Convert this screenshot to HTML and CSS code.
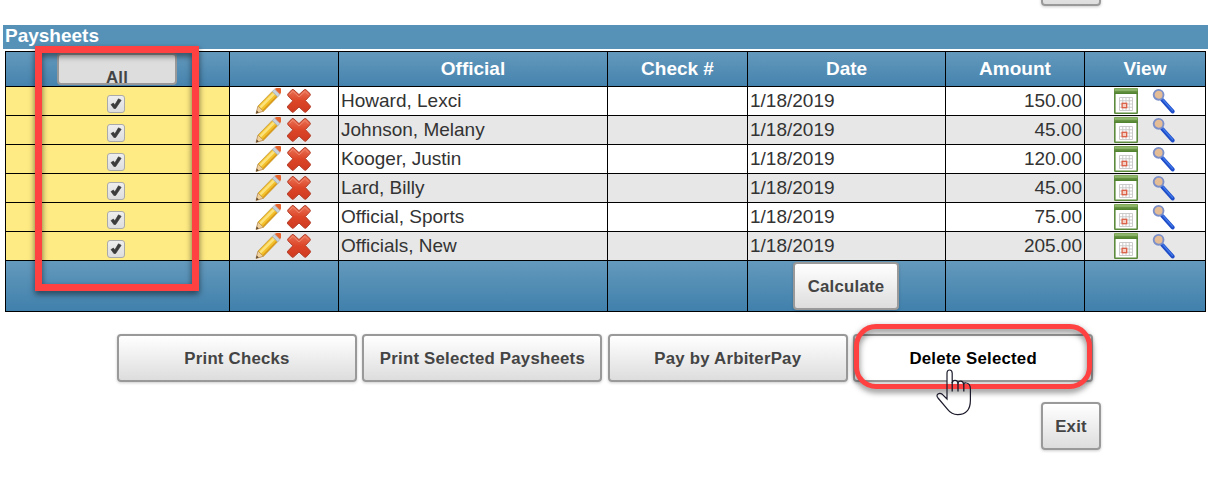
FILE: index.html
```
<!DOCTYPE html>
<html lang="en">
<head>
    <meta charset="UTF-8">
    <meta name="viewport" content="width=device-width, initial-scale=1.0">
    <title>Paysheets</title>
    <link rel="stylesheet" href="styles.css">
</head>
<body>
    <!-- Shared row icons -->
    <svg class="sprite" aria-hidden="true">
        <defs>
            <linearGradient id="redFill" x1="0" y1="0" x2="0" y2="1">
                <stop offset="0" stop-color="#ea7458"/>
                <stop offset="0.5" stop-color="#dc4527"/>
                <stop offset="1" stop-color="#cf3a20"/>
            </linearGradient>
            <linearGradient id="greenFill" x1="0" y1="0" x2="0" y2="1">
                <stop offset="0" stop-color="#86ae5e"/>
                <stop offset="1" stop-color="#4d7f2c"/>
            </linearGradient>
        </defs>
        <symbol id="pencil" viewBox="0 0 26 26">
            <path d="M1 25.5L3 18L8.5 23.2Z" fill="#f0d2a0" stroke="#b98a4a" stroke-width="0.8"/>
            <path d="M1 25.5L1.7 22.6L3.8 24.6Z" fill="#5a4632"/>
            <path d="M3 18L17.5 3.2L22.8 8.5L8.5 23.2Z" fill="#f3c12c" stroke="#c39c48" stroke-width="0.8"/>
            <path d="M4.4 18.6L18.2 4.6L20 6.4L6 20.5Z" fill="#fbe27c"/>
            <path d="M7.6 22L21.2 8L22.2 9L8.6 23Z" fill="#d99a1c"/>
            <path d="M17.2 3.5L19.6 1.2L25 6.4L22.6 8.8Z" fill="#c9d3dc" stroke="#a3adb6" stroke-width="0.8"/>
            <path d="M19.8 1Q20.6 0 22 0H25Q26 0 26 1V4.6Q26 5.5 25 6.2Z" fill="#e5632c"/>
        </symbol>
        <symbol id="remove" viewBox="0 0 26 26">
            <path d="M6 1.6Q7 1.2 8 2L13 6.6L18 2Q19 1.2 20 1.8L24 5.6Q24.8 6.6 24 7.6L19.4 12.6L24.2 17.8Q25 18.8 24 19.8L20.4 23.8Q19.4 24.8 18.2 23.8L13 19L7.8 23.8Q6.8 24.8 5.8 24L1.8 20Q1 19 1.8 18L6.8 12.8L2 7.8Q1.2 6.8 2 5.8Z" fill="url(#redFill)" stroke="#b3402c" stroke-width="1"/>
            <path d="M3.4 6.6L6.8 3.2L13 9L19 3.4L22.4 6.8" fill="none" stroke="#f3967c" stroke-width="1" opacity="0.7"/>
        </symbol>
        <symbol id="calendar" viewBox="0 0 26 26">
            <rect x="1.8" y="0.8" width="22.4" height="24.6" rx="1" fill="#fff" stroke="#5d8b3d" stroke-width="1.6"/>
            <rect x="1" y="0" width="24" height="6" rx="1" fill="url(#greenFill)"/>
            <path d="M2 2H24" stroke="#a4c784" stroke-width="1"/>
            <path d="M6.5 9.5H19.5V22.5H6.5ZM9.75 9.5V22.5M13 9.5V22.5M16.25 9.5V22.5M6.5 12.75H19.5M6.5 16H19.5M6.5 19.25H19.5" fill="none" stroke="#c6c6c6" stroke-width="0.9"/>
            <rect x="9.1" y="15.3" width="4.6" height="4.4" fill="#f3cfc4" stroke="#dc5f45" stroke-width="1.3"/>
        </symbol>
        <symbol id="magnifier" viewBox="0 0 26 26">
            <path d="M11.4 12L21.6 23.4" stroke="#1f4dc8" stroke-width="4" stroke-linecap="round"/>
            <path d="M12 11.8L21.4 22.4" stroke="#4079ea" stroke-width="1.4" stroke-linecap="round"/>
            <circle cx="7.6" cy="6.8" r="4.9" fill="#e4bd96" stroke="#7b8fca" stroke-width="1.9"/>
        </symbol>
        <symbol id="check" viewBox="0 0 18 18">
            <path d="M3.4 9.6L6.2 8L7.6 10.2L11.8 3.2L14.8 4.8L8.6 14H6.6Z" fill="#3c3c3c" stroke="#3c3c3c" stroke-width="0.8"/>
        </symbol>
    </svg>

    <div class="page">
        <button type="button" class="btn btn-exit btn-top" aria-label="Exit"></button>

        <h2 class="section-title">Paysheets</h2>
        <table class="paysheets">
            <colgroup>
                <col class="col-select">
                <col class="col-edit">
                <col class="col-official">
                <col class="col-check">
                <col class="col-date">
                <col class="col-amount">
                <col class="col-view">
            </colgroup>
            <thead>
                <tr>
                    <th><button type="button" class="btn-all">All</button></th>
                    <th></th>
                    <th>Official</th>
                    <th>Check #</th>
                    <th>Date</th>
                    <th>Amount</th>
                    <th>View</th>
                </tr>
            </thead>
            <tbody>
                <tr>
                    <td class="select"><svg class="checkbox"><use href="#check"/></svg></td>
                    <td><div class="icons"><svg><use href="#pencil"/></svg><svg><use href="#remove"/></svg></div></td>
                    <td>Howard, Lexci</td>
                    <td></td>
                    <td>1/18/2019</td>
                    <td class="amount">150.00</td>
                    <td><div class="icons icons-view"><svg><use href="#calendar"/></svg><svg><use href="#magnifier"/></svg></div></td>
                </tr>
                <tr>
                    <td class="select"><svg class="checkbox"><use href="#check"/></svg></td>
                    <td><div class="icons"><svg><use href="#pencil"/></svg><svg><use href="#remove"/></svg></div></td>
                    <td>Johnson, Melany</td>
                    <td></td>
                    <td>1/18/2019</td>
                    <td class="amount">45.00</td>
                    <td><div class="icons icons-view"><svg><use href="#calendar"/></svg><svg><use href="#magnifier"/></svg></div></td>
                </tr>
                <tr>
                    <td class="select"><svg class="checkbox"><use href="#check"/></svg></td>
                    <td><div class="icons"><svg><use href="#pencil"/></svg><svg><use href="#remove"/></svg></div></td>
                    <td>Kooger, Justin</td>
                    <td></td>
                    <td>1/18/2019</td>
                    <td class="amount">120.00</td>
                    <td><div class="icons icons-view"><svg><use href="#calendar"/></svg><svg><use href="#magnifier"/></svg></div></td>
                </tr>
                <tr>
                    <td class="select"><svg class="checkbox"><use href="#check"/></svg></td>
                    <td><div class="icons"><svg><use href="#pencil"/></svg><svg><use href="#remove"/></svg></div></td>
                    <td>Lard, Billy</td>
                    <td></td>
                    <td>1/18/2019</td>
                    <td class="amount">45.00</td>
                    <td><div class="icons icons-view"><svg><use href="#calendar"/></svg><svg><use href="#magnifier"/></svg></div></td>
                </tr>
                <tr>
                    <td class="select"><svg class="checkbox"><use href="#check"/></svg></td>
                    <td><div class="icons"><svg><use href="#pencil"/></svg><svg><use href="#remove"/></svg></div></td>
                    <td>Official, Sports</td>
                    <td></td>
                    <td>1/18/2019</td>
                    <td class="amount">75.00</td>
                    <td><div class="icons icons-view"><svg><use href="#calendar"/></svg><svg><use href="#magnifier"/></svg></div></td>
                </tr>
                <tr>
                    <td class="select"><svg class="checkbox"><use href="#check"/></svg></td>
                    <td><div class="icons"><svg><use href="#pencil"/></svg><svg><use href="#remove"/></svg></div></td>
                    <td>Officials, New</td>
                    <td></td>
                    <td>1/18/2019</td>
                    <td class="amount">205.00</td>
                    <td><div class="icons icons-view"><svg><use href="#calendar"/></svg><svg><use href="#magnifier"/></svg></div></td>
                </tr>
            </tbody>
            <tfoot>
                <tr>
                    <td></td>
                    <td></td>
                    <td></td>
                    <td></td>
                    <td><button type="button" class="btn btn-calculate">Calculate</button></td>
                    <td></td>
                    <td></td>
                </tr>
            </tfoot>
        </table>

        <div class="actions">
            <button type="button" class="btn">Print Checks</button>
            <button type="button" class="btn">Print Selected Paysheets</button>
            <button type="button" class="btn">Pay by ArbiterPay</button>
            <button type="button" class="btn btn-hover">Delete Selected</button>
        </div>
        <button type="button" class="btn btn-exit">Exit</button>

        <!-- Callouts and pointer lying over the page -->
        <svg class="pointer" viewBox="0 0 36 48">
            <path d="M11 30V4.2Q11 1 13.6 1Q16.2 1 16.2 4.2V14Q16.6 11.4 19 11.4Q21.4 11.4 22 14Q22.6 12.2 24.6 12.2Q27 12.2 27.6 15Q28.4 13.6 30.4 14Q34.4 14.6 34.4 20V31Q34.4 45.6 21.6 45.6Q15.6 45.6 11.6 40.4L2 29Q0 26.4 2 25Q4 23.6 6.6 25.6Z" fill="#fff"/>
        </svg>
        <div class="callout callout-select"></div>
        <div class="callout callout-delete"></div>
        <svg class="pointer" viewBox="0 0 36 48">
            <path d="M11 30V4.2Q11 1 13.6 1Q16.2 1 16.2 4.2V14Q16.6 11.4 19 11.4Q21.4 11.4 22 14Q22.6 12.2 24.6 12.2Q27 12.2 27.6 15Q28.4 13.6 30.4 14Q34.4 14.6 34.4 20V31Q34.4 45.6 21.6 45.6Q15.6 45.6 11.6 40.4L2 29Q0 26.4 2 25Q4 23.6 6.6 25.6Z" fill="none" stroke="#1b1b2b" stroke-width="1.2"/>
            <path d="M16.2 13V22.4M22 14V22.4M27.8 15V22.4" stroke="#1b1b2b" stroke-width="1.3"/>
        </svg>
    </div>
</body>
</html>
```
FILE: styles.css
```
body {
    font-family: Arial, "Liberation Sans", sans-serif;
    font-size: 19px;
    color: #333;
    background-color: #fff;
    margin: 0;
    padding: 0;
}

.page {
    position: relative;
    width: 1232px;
    height: 491px;
    overflow: hidden;
}

.sprite {
    position: absolute;
    width: 0;
    height: 0;
}

/* Buttons */
.btn {
    display: block;
    box-sizing: border-box;
    height: 48px;
    padding: 1px 0 0;
    font-family: inherit;
    font-size: 16.8px;
    font-weight: bold;
    letter-spacing: 0.23px;
    color: #444;
    white-space: nowrap;
    background: linear-gradient(#fff, #ddd);
    border: 2px solid #999;
    border-radius: 4px;
    box-shadow: 0 1px 3px rgba(0, 0, 0, 0.2);
}

.btn-exit {
    width: 60px;
    margin: 20px 0 0 1041px;
}

.btn-top {
    margin-top: -42px;
}

.btn-hover {
    color: #000;
    background: #fff;
}

.btn-calculate {
    width: 106px;
    margin: 0 0 0 45px;
}

.btn-all {
    display: block;
    box-sizing: border-box;
    width: 120px;
    height: 32px;
    margin: 0 0 0 51px;
    padding: 14px 0 0;
    overflow: hidden;
    font-family: inherit;
    font-size: 16.8px;
    font-weight: bold;
    letter-spacing: 0.23px;
    line-height: 18px;
    color: #444;
    background: #ddd;
    border: 2px solid #999;
    border-radius: 4px;
}

/* Paysheets table */
.section-title {
    width: 1203px;
    height: 24px;
    margin: 19px 0 2px 3px;
    padding-left: 2px;
    font-size: 19px;
    line-height: 22px;
    color: #fff;
    background-color: #5692b8;
}

.paysheets {
    table-layout: fixed;
    width: 1201px;
    margin-left: 5px;
    border-spacing: 1px;
    background-color: #000;
}

.col-select { width: 223px; }
.col-edit { width: 108px; }
.col-official { width: 268px; }
.col-check { width: 139px; }
.col-date { width: 197px; }
.col-amount { width: 138px; }
.col-view { width: 120px; }

.paysheets th,
.paysheets td {
    padding: 0;
}

.paysheets th {
    height: 34px;
    color: #fff;
    background: linear-gradient(#6499bc, #4583ae);
}

.paysheets tbody td {
    height: 28px;
    padding-left: 2px;
    line-height: 28px;
    vertical-align: top;
    box-sizing: border-box;
    background-color: #fff;
}

.paysheets tbody tr:nth-child(even) td {
    background-color: #e7e7e7;
}

.paysheets tbody tr td.select {
    padding: 8px 0 0 101px;
    background-color: #ffeb84;
}

.paysheets tbody td.amount {
    padding-right: 2px;
    text-align: right;
}

.paysheets tfoot td {
    height: 50px;
    background: linear-gradient(#6499bc, #4080ac);
}

.checkbox {
    display: block;
    box-sizing: border-box;
    width: 18px;
    height: 18px;
    border: 1.5px solid #aaa;
    border-radius: 3px;
    background: linear-gradient(#eee, #ddd);
}

.icons {
    display: flex;
    gap: 5px;
    padding: 1px 0 0 23px;
}

.icons-view {
    gap: 12px;
    padding-left: 26px;
}

.icons svg {
    width: 26px;
    height: 26px;
}

/* Actions under the table */
.actions {
    display: grid;
    grid-template-columns: repeat(4, 240px);
    column-gap: 5.4px;
    margin: 22px 0 0 117px;
}

/* Callouts */
.callout {
    position: absolute;
    box-sizing: border-box;
    border-style: solid;
    border-color: #ff4141;
    filter: drop-shadow(0 3px 3px rgba(0, 0, 0, 0.55));
}

.callout-select {
    left: 35px;
    top: 46px;
    width: 164px;
    height: 245px;
    border-width: 7px;
}

.callout-delete {
    left: 854px;
    top: 324px;
    width: 238px;
    height: 65px;
    border-width: 5px;
    border-radius: 22px;
}

.pointer {
    position: absolute;
    left: 936px;
    top: 369px;
    width: 36px;
    height: 48px;
}
```
